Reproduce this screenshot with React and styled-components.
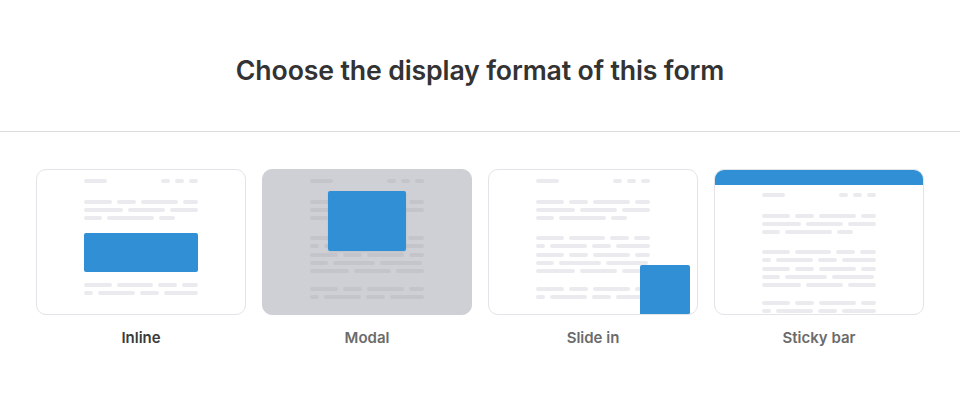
import React from 'react';
import styled, { createGlobalStyle } from 'styled-components';

const GlobalStyle = createGlobalStyle`
  * {
    box-sizing: border-box;
  }
  body {
    margin: 0;
    background: #ffffff;
    font-family: Inter, "Noto Sans", sans-serif;
  }
`;

const BLUE = '#3190d5';

const Container = styled.div`
  width: 960px;
  height: 416px;
  background: #ffffff;
`;

const Header = styled.div`
  padding: 54px 0 45px;
  border-bottom: 1px solid #dcdcdf;
`;

const Title = styled.h1`
  margin: 0;
  font-size: 26.7px;
  line-height: 32px;
  font-weight: 600;
  color: #333333;
  text-align: center;
  letter-spacing: -0.15px;
`;

const Options = styled.div`
  display: grid;
  grid-template-columns: repeat(4, 1fr);
  gap: 16px;
  padding: 37px 36px 0;
`;

const Option = styled.div`
  display: flex;
  flex-direction: column;
  align-items: center;
  cursor: pointer;
`;

const Card = styled.div`
  position: relative;
  width: 100%;
  height: 146px;
  border: 1px solid ${(p) => (p.$dim ? '#cfd0d5' : '#e3e3e8')};
  border-radius: 10px;
  background: ${(p) => (p.$dim ? '#cfd0d5' : '#ffffff')};
  overflow: hidden;
`;

const StickyBar = styled.div`
  height: 15px;
  background: ${BLUE};
`;

const Page = styled.div`
  width: 114px;
  margin: 0 auto;
  padding-top: ${(p) => p.$top}px;
  display: flex;
  flex-direction: column;
`;

const PageHead = styled.div`
  display: flex;
  justify-content: space-between;
  margin-bottom: 16.7px;
`;

const Group = styled.div`
  display: flex;
  flex-direction: column;
  gap: 4.33px;
  margin-bottom: ${(p) => p.$after || 0}px;
`;

const Row = styled.div`
  display: flex;
  gap: 5px;
`;

const Line = styled.span`
  display: block;
  height: 4px;
  border-radius: 2px;
  background: ${(p) => (p.$dim ? '#c4c5cb' : '#ebebef')};
`;

const InlineBox = styled.div`
  height: 39px;
  margin: 12.4px 0 11.3px;
  border-radius: 2px;
  background: ${BLUE};
`;

const ModalBox = styled.div`
  position: absolute;
  top: 21px;
  left: 50%;
  width: 78px;
  height: 60px;
  margin-left: -39.5px;
  border-radius: 2px;
  background: ${BLUE};
  box-shadow: 0 1px 2px rgba(0, 0, 0, 0.08);
`;

const SlideBox = styled.div`
  position: absolute;
  right: 7px;
  bottom: -1px;
  width: 50px;
  height: 50px;
  border-radius: 2px 2px 0 0;
  background: ${BLUE};
`;

const Label = styled.div`
  margin-top: 13px;
  font-size: 15px;
  line-height: 20px;
  font-weight: 600;
  color: ${(p) => (p.$active ? '#3a3a3a' : '#6b6b6b')};
`;

// skeleton text rows, widths in px
const ROWS = {
  a: [28, 19, 38, 15],
  b: [39, 37, 28],
  c: [18, 47, 16],
  d: [28, 37, 19, 16],
  e: [9, 37, 19, 34],
  f: [18, 42, 42],
};

const SkeletonRow = ({ kind, dim }) => (
  <Row>
    {ROWS[kind].map((w, i) => (
      <Line key={i} $dim={dim} style={{ width: w }} />
    ))}
  </Row>
);

const SkeletonHead = ({ dim }) => (
  <PageHead>
    <Line $dim={dim} style={{ width: 23 }} />
    <Row>
      <Line $dim={dim} style={{ width: 9 }} />
      <Line $dim={dim} style={{ width: 9 }} />
      <Line $dim={dim} style={{ width: 9 }} />
    </Row>
  </PageHead>
);

const SkeletonGroup = ({ rows, dim, after }) => (
  <Group $after={after}>
    {rows.map((k, i) => (
      <SkeletonRow key={i} kind={k} dim={dim} />
    ))}
  </Group>
);

const FullPage = ({ dim, top = 9 }) => (
  <Page $top={top}>
    <SkeletonHead dim={dim} />
    <SkeletonGroup rows={['a', 'b', 'c']} dim={dim} after={15.7} />
    <SkeletonGroup rows={['d', 'e', 'a', 'f', 'b']} dim={dim} after={13.3} />
    <SkeletonGroup rows={['a', 'e']} dim={dim} />
  </Page>
);

const App = () => {
  return (
    <Container>
      <GlobalStyle />
      <Header>
        <Title>Choose the display format of this form</Title>
      </Header>
      <Options>
        <Option>
          <Card>
            <Page $top={9}>
              <SkeletonHead />
              <SkeletonGroup rows={['a', 'b', 'c']} />
              <InlineBox />
              <SkeletonGroup rows={['d', 'e']} />
            </Page>
          </Card>
          <Label $active>Inline</Label>
        </Option>
        <Option>
          <Card $dim>
            <FullPage dim />
            <ModalBox />
          </Card>
          <Label>Modal</Label>
        </Option>
        <Option>
          <Card>
            <FullPage />
            <SlideBox />
          </Card>
          <Label>Slide in</Label>
        </Option>
        <Option>
          <Card>
            <StickyBar />
            <FullPage top={8} />
          </Card>
          <Label>Sticky bar</Label>
        </Option>
      </Options>
    </Container>
  );
};

export default App;
